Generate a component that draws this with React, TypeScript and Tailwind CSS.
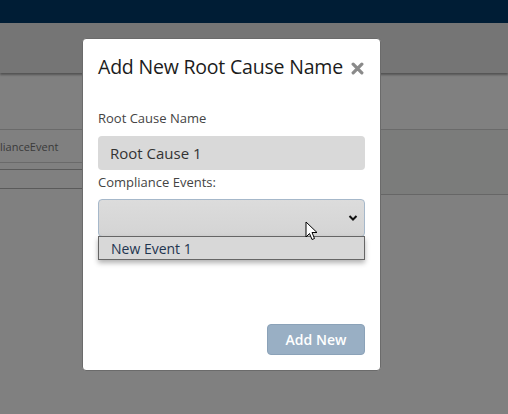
import React from "react";

const font = { fontFamily: '"Open Sans", "Liberation Sans", sans-serif' };

function Cursor() {
  return (
    <svg width="14" height="20" viewBox="0 0 14 20" className="absolute left-[305px] top-[221px]">
      <path d="M1 1 L1 16 L4.5 12.5 L7 18.5 L9.5 17.5 L7 11.5 L12 11.5 Z" fill="#fff" stroke="#000" strokeWidth="1" strokeLinejoin="round" />
    </svg>
  );
}

export default function App() {
  return (
    <div className="relative w-[508px] h-[414px] overflow-hidden bg-[#808080]" style={font}>
      {/* dimmed page underneath */}
      <div className="h-[23px] bg-[#001d35]" />
      <div className="h-[50px] bg-[#757575] shadow-[0_2px_2px_rgba(0,0,0,0.35)] relative" />
      <div className="flex pt-[56px]">
        <div className="w-[82px]">
          <div className="h-px bg-[#6a6a6a]" />
          <div className="h-[32px] flex items-center pt-[3px] text-[11px] text-[#3a3a3a] whitespace-nowrap">
            lianceEvent
          </div>
          <div className="h-px bg-[#6a6a6a]" />
          <div className="h-[6px]" />
          <div className="h-px bg-[#5a5a5a]" />
          <div className="h-[18px]" />
          <div className="h-px bg-[#5a5a5a]" />
        </div>
        <div className="flex-1 ml-[298px]">
          <div className="h-px bg-[#6a6a6a]" />
          <div className="h-[64px] bg-[#7b7c7b]" />
          <div className="h-px bg-[#666]" />
        </div>
      </div>

      {/* modal */}
      <div className="absolute left-[82px] top-[38px] w-[299px] h-[333px] bg-white rounded-[4px] border border-[#6b6b6b] flex flex-col px-[15px]">
        <div className="flex items-center justify-between mt-[14px] h-[28px]">
          <h2 className="text-[19.5px] text-[#1c1c1c] leading-none tracking-[-0.2px]">Add New Root Cause Name</h2>
          <svg width="13" height="13" viewBox="0 0 12 12" className="mr-[1px] mt-[2px]">
            <path d="M2 2 L10 10 M10 2 L2 10" stroke="#8a8a8a" strokeWidth="3" strokeLinecap="round" />
          </svg>
        </div>
        <label className="mt-[31px] text-[13px] text-[#444] leading-none">Root Cause Name</label>
        <div className="mt-[11px] h-[34px] rounded-[4px] bg-[#d9d9d9] flex items-center px-[12px] text-[15px] text-[#333]">
          Root Cause 1
        </div>
        <label className="mt-[6px] text-[13px] text-[#444] leading-none">Compliance Events:</label>
        <div className="mt-[10px] h-[38px] rounded-[4px] border border-[#a6b8ca] bg-gradient-to-b from-[#dcdcdc] to-[#d4d4d4] flex items-center justify-end pr-[6px]">
          <svg width="10" height="8" viewBox="0 0 10 8">
            <path d="M1.5 2 L5 5.5 L8.5 2" fill="none" stroke="#111" strokeWidth="2" />
          </svg>
        </div>
        <div className="h-[24px] border border-[#666] bg-[#d8d8d8] flex items-center pl-[12px] text-[14px] text-[#1f3550] shadow-[0_3px_5px_rgba(0,0,0,0.3)] -mt-[1px]">
          New Event 1
        </div>
        <div className="flex-1" />
        <div className="flex justify-end mb-[15px]">
          <button className="w-[98px] h-[31px] rounded-[4px] bg-[#99afc4] border border-[#8ba2b8] text-white text-[14px] font-semibold">
            Add New
          </button>
        </div>
      </div>
      <Cursor />
    </div>
  );
}
